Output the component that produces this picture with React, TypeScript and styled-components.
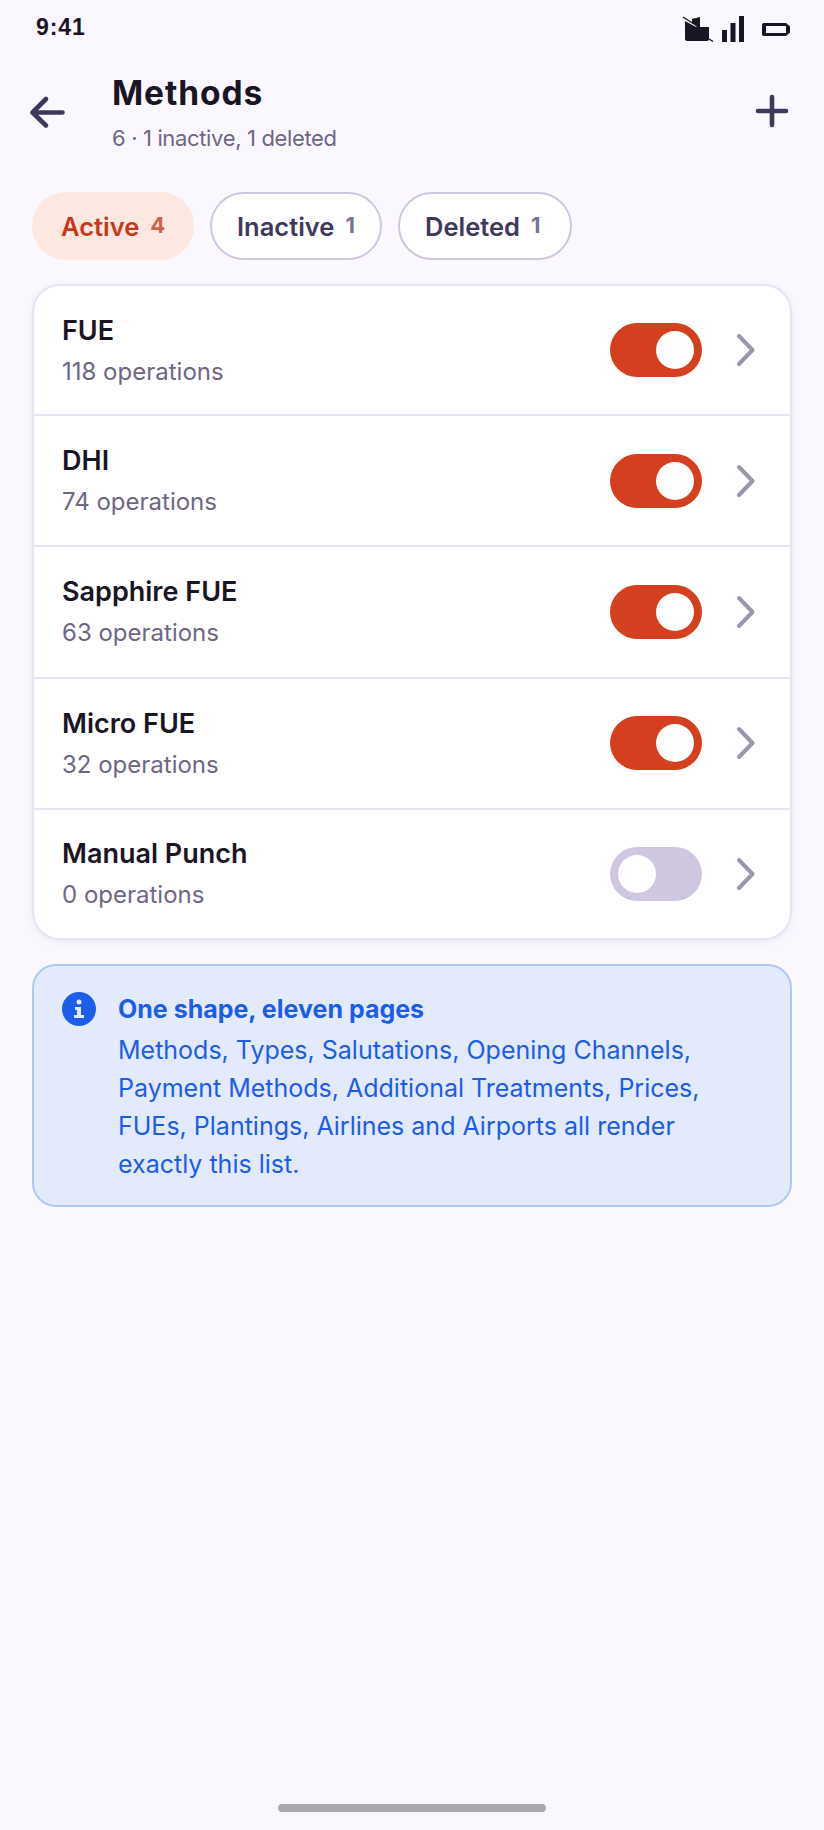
import React from "react";
import styled, { createGlobalStyle } from "styled-components";

const Global = createGlobalStyle`
  html, body { margin: 0; padding: 0; background: #faf8fe; }
  body { font-family: Inter, "Noto Sans", sans-serif; -webkit-font-smoothing: antialiased; }
  * { box-sizing: border-box; }
`;

const Page = styled.div`
  position: relative;
  width: 824px;
  height: 1830px;
  background: #faf8fe;
  overflow: hidden;
`;

const StatusBar = styled.div`
  height: 56px;
  padding: 14px 34px 0 36px;
  display: flex;
  justify-content: space-between;
  align-items: flex-start;
`;

const Clock = styled.span`
  font-family: "Liberation Sans", sans-serif;
  font-weight: 700;
  font-size: 23px;
  line-height: 27px;
  letter-spacing: 0.9px;
  color: #1a1525;
`;

const StatusIcons = styled.div`
  display: flex;
  align-items: center;
`;

const Header = styled.header`
  display: flex;
  align-items: flex-start;
  padding: 19px 30px 0 28px;
  height: 136px;
`;

const IconButton = styled.div`
  width: 40px;
  height: 40px;
  flex: none;
  margin-top: 18px;
`;

const TitleBlock = styled.div`
  flex: 1;
  margin-left: 44px;
`;

const Title = styled.h1`
  margin: 0;
  font-size: 33.5px;
  line-height: 36px;
  font-weight: 700;
  letter-spacing: 0.9px;
  color: #1a1525;
`;

const Subtitle = styled.div`
  margin-top: 14px;
  font-size: 22px;
  line-height: 26px;
  letter-spacing: -0.35px;
  color: #6e6685;
`;

const Tabs = styled.div`
  display: flex;
  gap: 16px;
  padding: 0 32px;
`;

const Tab = styled.div<{ $active?: boolean; $width: number }>`
  width: ${(p) => p.$width}px;
  height: 68px;
  display: flex;
  align-items: center;
  gap: 11px;
  padding-left: ${(p) => (p.$active ? "27px" : "25px")};
  border-radius: 34px;
  border: 2px solid ${(p) => (p.$active ? "#fde8e1" : "#cfc6e0")};
  background: ${(p) => (p.$active ? "#fde8e1" : "#ffffff")};
  color: ${(p) => (p.$active ? "#c8391c" : "#40385a")};
  font-size: 25.5px;
  font-weight: 600;
`;

const TabCount = styled.span<{ $active?: boolean }>`
  font-size: 22px;
  font-weight: 700;
  color: ${(p) => (p.$active ? "#d0634a" : "#7a7390")};
  position: relative;
  top: -1px;
`;

const Card = styled.section`
  margin: 24px 32px 0;
  background: #ffffff;
  border: 2px solid #e8e3f2;
  border-radius: 28px;
  box-shadow: 0 2px 6px rgba(60, 40, 100, 0.08);
  overflow: hidden;
`;

const Row = styled.div`
  height: 131.3px;
  padding: 0 32px 0 28px;
  display: flex;
  align-items: center;
  border-bottom: 2px solid #e8e3f2;
  &:first-child {
    height: 130px;
  }
  &:last-child {
    border-bottom: none;
    height: 128.1px;
  }
`;

const RowText = styled.div`
  flex: 1;
`;

const RowName = styled.div`
  font-size: 27px;
  line-height: 32px;
  font-weight: 600;
  color: #1a1525;
`;

const RowSub = styled.div`
  margin-top: 11px;
  font-size: 24px;
  line-height: 28px;
  color: #6e6685;
`;

const Toggle = styled.div<{ $on: boolean }>`
  width: 92px;
  height: 54px;
  border-radius: 27px;
  padding: 8px;
  display: flex;
  justify-content: ${(p) => (p.$on ? "flex-end" : "flex-start")};
  background: ${(p) => (p.$on ? "#d43f20" : "#cfc6e0")};
`;

const Knob = styled.div`
  width: 38px;
  height: 38px;
  border-radius: 50%;
  background: #ffffff;
`;

const Chevron = styled.svg`
  margin-left: 34px;
  flex: none;
`;

const Note = styled.aside`
  margin: 24px 32px 0;
  height: 243px;
  padding: 26px 28px;
  display: flex;
  gap: 22px;
  background: #e3eafd;
  border: 2px solid #adc8f7;
  border-radius: 24px;
  color: #1c5dea;
`;

const NoteIcon = styled.svg`
  flex: none;
`;

const NoteBody = styled.div`
  flex: 1;
  padding-top: 2px;
`;

const NoteTitle = styled.div`
  font-size: 25px;
  line-height: 30px;
  font-weight: 700;
`;

const NoteText = styled.div`
  margin-top: 7px;
  max-width: 600px;
  font-size: 25px;
  line-height: 38px;
`;

const HomeBar = styled.div`
  position: absolute;
  left: 278px;
  bottom: 18px;
  width: 268px;
  height: 8px;
  border-radius: 4px;
  background: #a9a7ad;
`;

const rows = [
  { name: "FUE", sub: "118 operations", on: true },
  { name: "DHI", sub: "74 operations", on: true },
  { name: "Sapphire FUE", sub: "63 operations", on: true },
  { name: "Micro FUE", sub: "32 operations", on: true },
  { name: "Manual Punch", sub: "0 operations", on: false },
];

export default function App() {
  return (
    <Page>
      <Global />
      <StatusBar>
        <Clock>9:41</Clock>
        <StatusIcons>
          <svg width="108" height="30" viewBox="0 0 108 30" fill="#1a1525">
            <path d="M3 13h24v12c0 1-1 2-2 2H5c-1 0-2-1-2-2z" />
            <path d="M3 7l11 6H3z" />
            <path d="M10 5l8-2v10h-3l-5-4z" />
            <path d="M1 3l11 7" stroke="#1a1525" strokeWidth="1.4" fill="none" />
            <path d="M27 25l4 2.500" stroke="#1a1525" strokeWidth="1.4" fill="none" />
            <rect x="40" y="16" width="5" height="12" />
            <rect x="48.500" y="9" width="5" height="19" />
            <rect x="57" y="2" width="5" height="26" />
            <path d="M82 9h22l4 3.500v6l-4 3.500H82c-1.500 0-2-1-2-2v-9c0-1 .5-2 2-2zm2 3v7h20v-7z" fillRule="evenodd" />
          </svg>
        </StatusIcons>
      </StatusBar>
      <Header>
        <IconButton>
          <svg width="40" height="40" viewBox="0 0 40 40" fill="none" stroke="#40385a" strokeWidth="4.6" strokeLinecap="round" strokeLinejoin="round">
            <path d="M34.500 20H5.500M18 6.500L4.500 20 18 33" transform="translate(0 -.5)" />
          </svg>
        </IconButton>
        <TitleBlock>
          <Title>Methods</Title>
          <Subtitle>6 · 1 inactive, 1 deleted</Subtitle>
        </TitleBlock>
        <IconButton>
          <svg width="36" height="40" viewBox="0 0 36 40" fill="none" stroke="#40385a" strokeWidth="4.6" strokeLinecap="round">
            <path d="M18 4v28M4 18h28" />
          </svg>
        </IconButton>
      </Header>
      <Tabs>
        <Tab $active $width={162}>
          Active <TabCount $active>4</TabCount>
        </Tab>
        <Tab $width={172}>
          Inactive <TabCount>1</TabCount>
        </Tab>
        <Tab $width={174}>
          Deleted <TabCount>1</TabCount>
        </Tab>
      </Tabs>
      <Card>
        {rows.map((r) => (
          <Row key={r.name}>
            <RowText>
              <RowName>{r.name}</RowName>
              <RowSub>{r.sub}</RowSub>
            </RowText>
            <Toggle $on={r.on}>
              <Knob />
            </Toggle>
            <Chevron width="22" height="36" viewBox="0 0 22 36" fill="none" stroke="#9a96ab" strokeWidth="4" strokeLinecap="round" strokeLinejoin="round">
              <path d="M3 4l13.500 14L3 32" />
            </Chevron>
          </Row>
        ))}
      </Card>
      <Note>
        <NoteIcon width="34" height="34" viewBox="0 0 34 34">
          <circle cx="17" cy="17" r="17" fill="#1c5dea" />
          <circle cx="17" cy="10" r="2.500" fill="#e3eafd" />
          <path d="M13 15h6v8h3v3H12v-3h3v-5h-2z" fill="#e3eafd" />
        </NoteIcon>
        <NoteBody>
          <NoteTitle>One shape, eleven pages</NoteTitle>
          <NoteText>
            Methods, Types, Salutations, Opening Channels, Payment Methods, Additional Treatments, Prices, FUEs, Plantings, Airlines and Airports all render exactly this list.
          </NoteText>
        </NoteBody>
      </Note>
      <HomeBar />
    </Page>
  );
}
